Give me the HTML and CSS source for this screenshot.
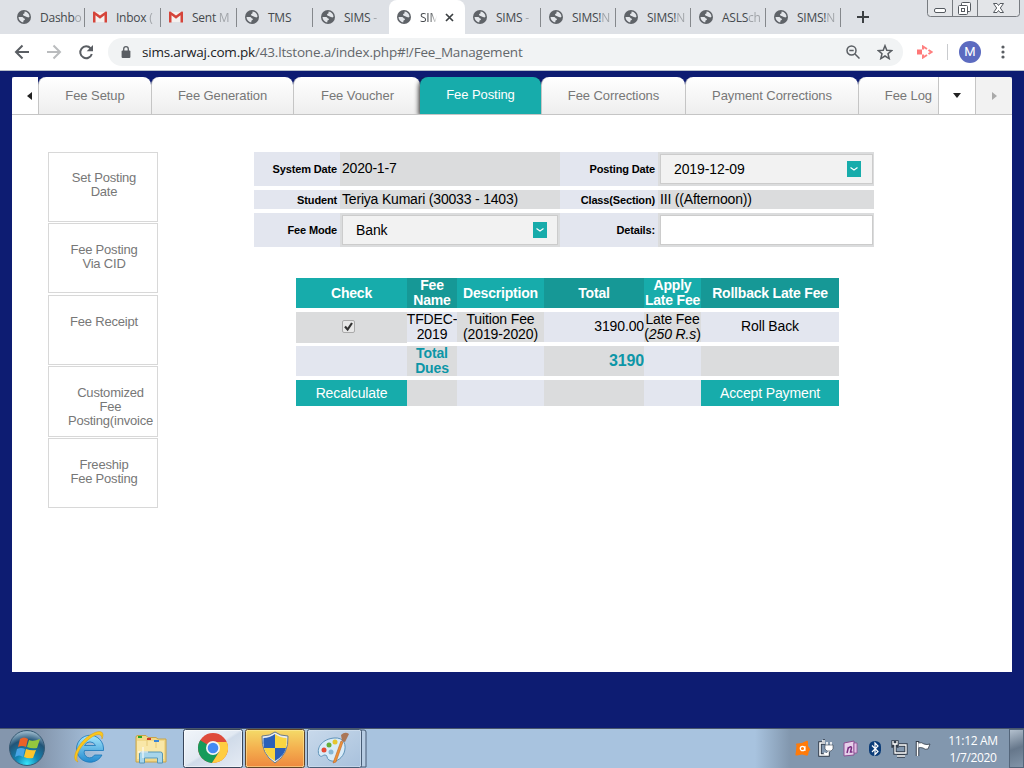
FILE: index.html
```html
<!DOCTYPE html>
<html lang="en">
<head>
<meta charset="utf-8">
<title>Fee Management</title>
<link rel="stylesheet" href="styles.css">
</head>
<body>
<svg class="defs" width="0" height="0">
  <symbol id="globe" viewBox="0 0 14 14"><circle cx="7" cy="7" r="7" fill="#5f6368"/><path d="M7.6 1.500c2.700.3 4.800 2.500 4.900 5.200-1 .9-1.600.9-2.300.3L9 6.800C8.300 5.700 7 6.200 6.200 5.200c-.5-.9.3-1.300 1-1.600.7-.4.1-1.100.4-2.100zM1.500 7l3.700.1c1.100.2 1.200 1.200 2 1.500 1.200.3.800 1.500-.2 1.700-.8.2-.5 1.300-.8 2.100C3.500 12.100 1.600 9.700 1.500 7z" fill="#e3e6ea"/></symbol>
  <symbol id="mail" viewBox="0 0 14 12"><path d="M1 1h12v10H1z" fill="#f4f1ef"/><path d="M0 1.500C0 .3 1 .2 1.700.7L7 4.600l5.300-3.900C13 .2 14 .3 14 1.500V11.500h-2.500V4.200L7 7.800 2.500 4.200v7.300H0z" fill="#d5443a"/></symbol>
  <symbol id="chev" viewBox="0 0 14 16"><path d="M0 0h14v16H0z" fill="#17acab"/><path d="M3.500 6.500l3.500 2.500 3.500-2.500" fill="none" stroke="#fff" stroke-width="1.200"/></symbol>
</svg>

<header class="strip">
  <div class="btab first"><svg class="fav"><use href="#globe"/></svg><span>Dashb<i>o</i></span></div>
  <div class="btab"><svg class="fav mail"><use href="#mail"/></svg><span>Inbox <i>(</i></span></div>
  <div class="btab"><svg class="fav mail"><use href="#mail"/></svg><span>Sent <i>M</i></span></div>
  <div class="btab"><svg class="fav"><use href="#globe"/></svg><span>TMS</span></div>
  <div class="btab noline"><svg class="fav"><use href="#globe"/></svg><span>SIMS <i>-</i></span></div>
  <div class="btab active"><svg class="fav"><use href="#globe"/></svg><span class="cut">SIM</span><svg class="close" viewBox="0 0 9 9"><path d="M1 1l7 7M8 1L1 8" stroke="#3c4043" stroke-width="1.700"/></svg></div>
  <div class="btab"><svg class="fav"><use href="#globe"/></svg><span>SIMS <i>-</i></span></div>
  <div class="btab small"><svg class="fav"><use href="#globe"/></svg><span>SIMS!<i>N</i></span></div>
  <div class="btab small"><svg class="fav"><use href="#globe"/></svg><span>SIMS!<i>N</i></span></div>
  <div class="btab small"><svg class="fav"><use href="#globe"/></svg><span>ASLS<i>ch</i></span></div>
  <div class="btab small"><svg class="fav"><use href="#globe"/></svg><span>SIMS!<i>N</i></span></div>
  <svg class="plus" viewBox="0 0 12 12"><path d="M6 0v12M0 6h12" stroke="#3c4043" stroke-width="2"/></svg>
  <svg class="winbtns" viewBox="0 0 94 18"><path d="M.5 0v13.500q0 3 3 3h86q3 0 3-3V0" fill="#e3e5e8" stroke="#777b80"/><path d="M25.500 0v16M50.500 0v16" stroke="#777b80"/><g fill="#fff" stroke="#555a60"><rect x="7.500" y="8.500" width="11" height="4" rx="1.500"/><rect x="34.500" y="2.500" width="9" height="9" rx="1"/><rect x="31.500" y="5.500" width="9" height="9" rx="1"/><rect x="34.500" y="8.500" width="3" height="3"/><path d="M66.500 3.500h3.500l1.500 2 1.500-2h3.500L73.300 8l3.200 4.500H73l-1.500-2-1.500 2h-3.500L69.700 8z"/></g></svg>
</header>

<div class="toolbar">
  <svg class="nav" viewBox="0 0 100 36"><g fill="none" stroke-width="2"><path d="M29 18H17M22.500 11.500L16 18l6.500 6.500" stroke="#5a5e63"/><path d="M47 18h12M53.500 11.500L60 18l-6.500 6.500" stroke="#babcbe"/><path d="M90.700 14.500A5.900 5.900 0 1 0 91.800 20" stroke="#5a5e63"/></g><path d="M93 11v6.300h-6.300z" fill="#5a5e63"/></svg>
  <div class="omnibox">
    <svg class="lock" viewBox="0 0 10 12"><rect y="4.500" x=".6" width="8.800" height="7.500" rx="1" fill="#5a5e63"/><path d="M2.700 5V3a2.300 2.300 0 0 1 4.600 0v2" fill="none" stroke="#5a5e63" stroke-width="1.300"/></svg>
    <span class="url"><b>sims.arwaj.com.pk</b>/43.ltstone.a/index.php#!/Fee_Management</span>
    <svg class="mag" viewBox="0 0 14 14"><g fill="none" stroke="#5a5e63" stroke-width="1.500"><circle cx="5.500" cy="5.500" r="4.500"/><path d="M9 9l4.500 4.500M3.300 5.500h4.400"/></g></svg>
    <svg class="star" viewBox="0 0 16 16"><path d="M8 1.700l1.800 4.500 4.900.4L11 9.800l1.200 4.800L8 12l-4.200 2.600L5 9.800 1.300 6.600l4.900-.4z" fill="none" stroke="#5a5e63" stroke-width="1.500"/></svg>
  </div>
  <svg class="ext" viewBox="0 0 16 14"><path d="M0 4.500h5v5H0z" fill="#ff7777"/><path d="M6 4.500V1.500L10 4M11.500 5L14.500 7l-3 2M10 10L6 12.500V9.500" fill="none" stroke="#ff8080" stroke-width="2"/></svg>
  <span class="tsep"></span>
  <span class="avatar">M</span>
  <svg class="dots" viewBox="0 0 4 14"><g fill="#5a5e63"><circle cx="2" cy="2" r="1.600"/><circle cx="2" cy="7" r="1.600"/><circle cx="2" cy="12" r="1.600"/></g></svg>
</div>

<main class="desktop">
  <div class="page">
    <nav class="tabs">
      <span class="arrow"><svg viewBox="0 0 5 8"><path d="M5 0v8L0 4z" fill="#222"/></svg></span>
      <a class="tab t1">Fee Setup</a><a class="tab t2">Fee Generation</a><a class="tab t3">Fee Voucher</a><a class="tab t4 on">Fee Posting</a><a class="tab t5">Fee Corrections</a><a class="tab t6">Payment Corrections</a><a class="tab t7">Fee Log</a>
      <span class="more"><svg viewBox="0 0 8 5"><path d="M0 0h8L4 5z" fill="#222"/></svg></span>
      <span class="next"><svg viewBox="0 0 5 8"><path d="M0 0v8l5-4z" fill="#aaa"/></svg></span>
    </nav>
    <div class="content">
      <aside class="side">
        <a>Set Posting<br>Date</a>
        <a class="low">Fee Posting<br>Via CID</a>
        <a class="low gap">Fee Receipt</a>
        <a class="wide">Customized<br>Fee<br>Posting(invoice</a>
        <a class="low">Freeship<br>Fee Posting</a>
      </aside>
      <section class="work">
        <div class="form">
          <div class="lb">System Date</div><div class="vl up">2020-1-7</div><div class="lb">Posting Date</div><div class="vl"><div class="select">2019-12-09<svg><use href="#chev"/></svg></div></div>
          <div class="lb">Student</div><div class="vl up1">Teriya Kumari (30033 - 1403)</div><div class="lb">Class(Section)</div><div class="vl up1">III ((Afternoon))</div>
          <div class="lb">Fee Mode</div><div class="vl"><div class="select">Bank<svg><use href="#chev"/></svg></div></div><div class="lb">Details:</div><div class="vl"><div class="input"></div></div>
        </div>
        <div class="fees">
          <div class="row head"><div>Check</div><div>Fee Name</div><div>Description</div><div>Total</div><div>Apply<br>Late Fee</div><div>Rollback Late Fee</div></div>
          <div class="row odd"><div class="tick"><svg viewBox="0 0 13 13"><rect x=".5" y=".5" width="12" height="12" rx="1.500" fill="#e8e8e8" stroke="#aaa"/><path d="M3 6.500l2.600 3L10 3" fill="none" stroke="#333" stroke-width="2.200"/></svg></div><div>TFDEC-<br>2019</div><div>Tuition Fee<br>(2019-2020)</div><div class="num">3190.00</div><div><span>Late Fee<br>(<em>250 R.s</em>)</span></div><div>Roll Back</div></div>
          <div class="row even total"><div></div><div>Total Dues</div><div></div><div class="num">3190</div><div></div><div></div></div>
          <div class="row even last"><div class="btn">Recalculate</div><div></div><div></div><div></div><div></div><div class="btn">Accept Payment</div></div>
        </div>
      </section>
    </div>
  </div>
</main>

<footer class="taskbar">
  <svg class="apps" viewBox="0 0 370 40">
    <defs>
      <radialGradient id="orb" cx=".5" cy=".95" r=".9"><stop offset="0" stop-color="#35e5fa"/><stop offset=".35" stop-color="#1386b4"/><stop offset=".75" stop-color="#225477"/><stop offset="1" stop-color="#92b1c5"/></radialGradient>
      <linearGradient id="ie" x2="0" y2="1"><stop offset="0" stop-color="#a5e8fc"/><stop offset="1" stop-color="#2289cf"/></linearGradient>
      <linearGradient id="hot" x2="0" y2="1"><stop offset="0" stop-color="#f4da68"/><stop offset=".5" stop-color="#f4b04f"/><stop offset="1" stop-color="#ee883e"/></linearGradient>
      <linearGradient id="lit" x2="1" y2="1"><stop offset="0" stop-color="#f1f5fa"/><stop offset=".48" stop-color="#e2e9f2"/><stop offset=".52" stop-color="#d0dbe9"/><stop offset="1" stop-color="#e5ebf4"/></linearGradient>
      <linearGradient id="dim" x2="1" y2="1"><stop offset="0" stop-color="#c8d9eb"/><stop offset="1" stop-color="#a8c1dc"/></linearGradient>
    </defs>
    <circle cx="27" cy="19" r="17.500" fill="url(#orb)" stroke="#375a74"/>
    <path d="M20 10q4-3 8 0l-2 8q-4-2-8 0z" fill="#e96128"/><path d="M29 11q4 2 11-1l-3 9q-5 1-10-1z" fill="#94c83e"/><path d="M17 20q4-2 8 0l-2 8q-4-3-8 0z" fill="#48a5e6"/><path d="M26 20q5 2 10 1l-3 8q-5 1-9-1z" fill="#fec52c"/>
    <path d="M103.500 21.500V19A13.500 13.500 0 1 0 102 26h-7.500a5.500 5.500 0 0 1-10-4.500zM84.500 16.500a6 6 0 0 1 11 0z" fill="url(#ie)" stroke="#1976b8" stroke-width=".8"/>
    <path d="M78 33c-9-3 2-22 14-28 9-5 13-2 10 5 0-5-4-6-10-2-11 7-18 20-14 25z" fill="#fcc71c" stroke="#d89b0c" stroke-width=".5"/>
    <path d="M136 33V8q0-1.500 2-1.500h8l2 2h8l2 1.500h8V33z" fill="#f1d889" stroke="#c8a449"/><path d="M137 12h27v18h-27z" fill="#f9e7a8"/><path d="M147 10v7M156 12v7" stroke="#e5c978"/><path d="M138 7h4v2h-4z" fill="#28a626"/><path d="M147 9h4v2h-4z" fill="#cf392a"/><path d="M154 11h5v2h-5z" fill="#3b86d5"/><path d="M139.500 34V25q0-2 2-2h19q2 0 2 2v9h-5v-5h-13v5z" fill="#a7d5eb" stroke="#5796b5"/><path d="M143 18v11M138 23h10" stroke="#fff"/>
    <rect x="184" y="1" width="58" height="37" rx="2" fill="url(#lit)" stroke="#fff"/><rect x="183.500" y=".5" width="59" height="38" rx="2" fill="none" stroke="#38455a"/>
    <rect x="246" y="1" width="58" height="37" rx="2" fill="url(#hot)" stroke="#fff0ac"/><rect x="245.500" y=".5" width="59" height="38" rx="2" fill="none" stroke="#604428"/>
    <path d="M361 1h3q2 0 2 2v35h-5z" fill="#b7cce3" stroke="#485d76"/><rect x="308" y="1" width="53" height="37" rx="2" fill="url(#dim)" stroke="#dce7f4"/><rect x="307.500" y=".5" width="54" height="38" rx="2" fill="none" stroke="#485d76"/>
    <circle cx="213" cy="19" r="15" fill="#de4b3c"/><path d="M213 19L200.200 11.200A15 15 0 0 0 212 34l7-11z" fill="#159b5b"/><path d="M213 19l6 4-7 11A15 15 0 0 0 226.800 13H213z" fill="#ffcd42"/><circle cx="213" cy="19" r="7" fill="#f4f4f4"/><circle cx="213" cy="19" r="5.300" fill="#448af4"/>
    <path d="M275 3q5 4 13 4 1 18-13 27-14-9-13-27 8 0 13-4z" fill="#e9edf1" stroke="#697b8a"/><path d="M275 5v14h-11q-1-5-.5-10 6 0 11.500-4z" fill="#2b60b8"/><path d="M275 19h11q-2 8-11 13z" fill="#2b60b8"/><path d="M275 5q5.500 4 11.500 4 .5 5-.5 10h-11zM264 19h11v13q-9-5-11-13z" fill="#f9d541"/>
    <path d="M319 26c-3-8 4-16 15-17 10-1 13 7 10 15-3 7-10 10-15 7-3-2-1-5-4-5s-3 3-6 0z" fill="#d9ecf9" stroke="#5f93b8"/><circle cx="324" cy="21" r="2.500" fill="#e44b35"/><circle cx="329" cy="16" r="2.500" fill="#65ae3a"/><circle cx="335" cy="13" r="2.500" fill="#e5c630"/><circle cx="331" cy="23" r="2.500" fill="#88b7d5"/><path d="M333 34l8-22 2 1-7 20z" fill="#ee9139" stroke="#bd6424" stroke-width=".6"/><path d="M342 12l-1-6q4-4 8-1l-4 8z" fill="#aa7656"/>
  </svg>
  <svg class="tray" viewBox="0 0 145 40">
    <path d="M1.500 16q-1.500-1 .5-1.500l5-.5 4-2q2-1 2 1v4l2 3q1 1-1 2l-1 4q-.5 1-2 .5l-4-1-5 1q-2 .5-1.500-1.500l.5-3z" fill="#ff7b0a"/><circle cx="7.500" cy="19.500" r="2.200" fill="none" stroke="#fff" stroke-width="1.300"/><path d="M10 17v5" stroke="#fff"/>
    <g fill="none" stroke="#333d4a" stroke-width="3.500"><path d="M30 14h-5v12h8v-3M28 12h2"/></g><g fill="none" stroke="#fff" stroke-width="1.600"><path d="M30 14h-5v12h8v-3M27 12h3M32 13v3M36 13v3M34 22q-2 4-5 2"/></g><path d="M30 16h8v4l-2 2h-4l-2-2z" fill="#fff" stroke="#333d4a" stroke-width=".6"/>
    <path d="M49 14l10-2v14l-10 1z" fill="#e7cfea" stroke="#8d4f93"/><path d="M59 14h3v10h-3z" fill="#e3bfe5" stroke="#8d4f93" stroke-width=".8"/><path d="M52 24l1.500-6M52.500 20q4-4 4-1l-1 4h2" fill="none" stroke="#792d82" stroke-width="1.500"/>
    <rect x="74" y="12" width="12" height="15" rx="5.500" fill="#0b3c78"/><path d="M77 16.500l6 6-3 3V14l3 3-6 6" fill="none" stroke="#fff" stroke-width="1.200"/>
    <g transform="translate(4)"><path d="M100 16h7v8H96v-5M98 27h8M94 13h4v4h-4z" stroke="#333d4a" stroke-width="3.300" fill="none"/><path d="M100 16h7v8H96v-6M98 27h8M94 12v3h4v-3M96 15v5" stroke="#fff" stroke-width="1.300" fill="none"/></g>
    <g transform="translate(5)"><path d="M117.500 12v15" stroke="#333d4a" stroke-width="3.500"/><path d="M118 14q4-1 6 1 3 1 6 0l-2 5q-3 1-5-1-3-1-5 0z" fill="#fff" stroke="#333d4a" stroke-width=".8"/><path d="M117.500 13v14" stroke="#fff" stroke-width="1.500"/></g>
  </svg>
  <div class="clock">11:12 AM<br>1/7/2020</div>
  <div class="peek"></div>
</footer>
</body>
</html>
```
FILE: styles.css
```css
* { box-sizing: border-box; }
body { margin: 0; width: 1024px; height: 768px; overflow: hidden; display: flex; flex-direction: column; font-family: "Liberation Sans", Arial, sans-serif; }
svg { display: block; flex: none; }
.defs { display: none; }

.strip { height: 34px; flex: none; display: flex; background: #dee1e6; font: 12px "Open Sans", "Noto Sans", sans-serif; color: #45494d; position: relative; }
.btab { width: 76px; height: 34px; padding-left: 8px; display: flex; align-items: center; flex: none; position: relative; letter-spacing: -.25px; white-space: nowrap; }
.btab::after { content: ""; position: absolute; right: 0; top: 8px; width: 1px; height: 19px; background: #85888c; }
.btab.noline::after, .btab.active::after { display: none; }
.btab.first { width: 85px; padding-left: 17px; }
.btab.small { width: 75px; }
.fav { width: 14px; height: 14px; margin-right: 9px; }
.fav.mail { height: 12px; }
.btab i { font-style: normal; opacity: .4; }
.btab.active { background: #fff; border-radius: 8px 8px 0 0; }
.cut { width: 17px; overflow: hidden; -webkit-mask-image: linear-gradient(90deg, #000 60%, transparent); mask-image: linear-gradient(90deg, #000 60%, transparent); }
.close { width: 9px; height: 9px; margin-left: 8px; }
.plus { width: 12px; height: 12px; margin: 11px 0 0 16px; }
.winbtns { width: 94px; height: 18px; position: absolute; left: 927px; top: 0; }

.toolbar { height: 37px; flex: none; display: flex; align-items: center; background: #fff; border-bottom: 1px solid #b7bfca; }
.nav { width: 100px; height: 36px; margin-right: 8px; }
.omnibox { width: 795px; height: 28px; border-radius: 14px; background: #f1f3f4; display: flex; align-items: center; padding: 0 10px 0 13px; }
.lock { width: 10px; height: 12px; margin-right: 11px; }
.url { flex: 1; font: 13.5px "Open Sans", "Noto Sans", sans-serif; color: #63676b; letter-spacing: -.19px; white-space: nowrap; }
.url b { font-weight: 400; color: #202124; }
.mag { width: 14px; height: 14px; margin-right: 17px; }
.star { width: 16px; height: 16px; }
.ext { width: 16px; height: 14px; margin-left: 14px; }
.tsep { width: 1px; height: 16px; background: #c9cbce; margin-left: 14px; }
.avatar { width: 22px; height: 22px; border-radius: 50%; background: #5c6bc0; color: #fff; font: 13px/22px Roboto, sans-serif; text-align: center; margin-left: 11px; }
.dots { width: 4px; height: 14px; margin-left: 20px; }

.desktop { height: 657px; flex: none; background: #0d1c72; padding: 6px 12px 56px; }
.page { height: 595px; width: 1000px; background: #fff; border-radius: 2px 2px 0 0; }
.tabs { display: flex; height: 38px; border-bottom: 1px solid #c5c5c5; background: #0d1c72; font-size: 13px; color: #777; overflow: hidden; border-radius: 2px 2px 0 0; }
.tabs > * { flex: none; height: 37px; }
.arrow { width: 26px; display: flex; align-items: center; justify-content: flex-end; padding-right: 6px; background: #fff; }
.arrow svg, .next svg { width: 5px; height: 8px; }
.tab { line-height: 37px; text-align: center; border-left: 1px solid #c5c5c5; border-radius: 8px 8px 0 0; background: linear-gradient(#fff, #eee); letter-spacing: -.08px; }
.t1 { width: 113px; }
.t2 { width: 142px; }
.t3 { width: 127px; padding-left: 1px; }
.t4 { width: 121px; }
.t5 { width: 144px; }
.t6 { width: 173px; }
.t7 { width: 80px; text-align: right; padding-right: 6px; border-top-right-radius: 0; }
.tab.on { background: #17acab; color: #fff; border: 0; box-shadow: -1px 2px 5px #222; line-height: 35px; clip-path: inset(0 0 0 -7px); position: relative; }
.more, .next { width: 37px; background: #fff; border-left: 1px solid #c5c5c5; display: flex; align-items: center; justify-content: center; }
.more svg { width: 8px; height: 5px; }
.next { background: #f2f2f2; }

.content { display: flex; padding: 37px 0 0 36px; }
.side { width: 110px; font-size: 13px; line-height: 14px; color: #777; text-align: center; letter-spacing: -.2px; }
.side a { display: block; height: 70px; border: 1px solid #d8d8d8; margin-bottom: 1px; padding: 18px 0 0 2px; overflow: hidden; white-space: nowrap; }
.side .low { padding-top: 19px; }
.side .gap { margin-top: 2px; }
.side .wide { height: 71px; padding-left: 15px; padding-top: 19px; }
.work { margin-left: 96px; }
.form { display: grid; grid-template-columns: 86px 220px 98px 216px; grid-template-rows: 34px 19px 34px; row-gap: 4px; font-size: 14px; }
.form > div { display: flex; align-items: center; }
.form > .lb { background: #e3e6ef; font-size: 11px; font-weight: bold; justify-content: flex-end; padding-right: 3px; letter-spacing: -.15px; }
.vl { background: #dbdcdd; padding-left: 2px; white-space: nowrap; letter-spacing: -.19px; }
.up { padding-bottom: 2px; }
.up1 { padding-bottom: 1px; }
.select, .input { width: 216px; height: 30px; background: #f2f2f2; border: 1px solid #ccc; display: flex; align-items: center; justify-content: space-between; padding: 0 10px 0 13px; letter-spacing: -.1px; }
.vl:nth-child(4) .select, .input { width: 213px; padding-right: 11px; }
.select svg { width: 14px; height: 16px; }
.input { background: #fff; }

.fees { margin: 31px 0 0 42px; width: 543px; display: flex; flex-direction: column; gap: 4px; font-size: 14px; line-height: 15px; text-align: center; letter-spacing: -.13px; }
.row { display: grid; grid-template-columns: 111px 50px 87px 100px 57px 138px; grid-template-rows: 100%; height: 30px; }
.row > div { display: flex; align-items: center; justify-content: center; white-space: nowrap; }
.head > div:nth-child(2), .total > div:nth-child(2) { white-space: normal; }
.head { color: #fff; font-weight: bold; letter-spacing: -.2px; }
.head > div { background: #17acab; }
.head > div:nth-child(n+4), .head > div:nth-child(2) { background: #169896; }
.head > div:nth-child(5) { background: #17acab; }
.row > .num { justify-content: flex-end; }
.odd > :nth-child(odd), .even > :nth-child(even) { background: #dbdcdd; }
.odd > :nth-child(even), .even > :nth-child(odd) { background: #e3e6ef; }
.odd .tick { height: 31px; }
.odd > :not(.tick) { padding-bottom: 1px; }
.tick svg { width: 13px; height: 13px; margin: 0 7px 2px 0; }
.total { color: #0c96a7; font-weight: bold; }
.total .num { font-size: 16px; padding-bottom: 2px; }
.last { height: 26px; }
.last .btn { background: #17acab; color: #fff; }

.taskbar { height: 40px; flex: none; display: flex; background: linear-gradient(90deg, #8496ad 0, #8496ad 40px, #a8c3df 100px, #a8c3df 755px, #8297ae 790px, #8297ae); border-top: 1px solid #48566c; font: 12px/17px "Open Sans", "Noto Sans", sans-serif; color: #fff; }
.apps { width: 370px; height: 40px; }
.tray { width: 145px; height: 40px; margin-left: 425px; }
.clock { width: 66px; text-align: center; padding-top: 3px; letter-spacing: -.35px; white-space: nowrap; }
.peek { width: 15px; margin-left: 3px; height: 39px; border: 1px solid #53657a; background: linear-gradient(160deg, #b3c0ce, #66778b 50%, #8194a8); }
```
